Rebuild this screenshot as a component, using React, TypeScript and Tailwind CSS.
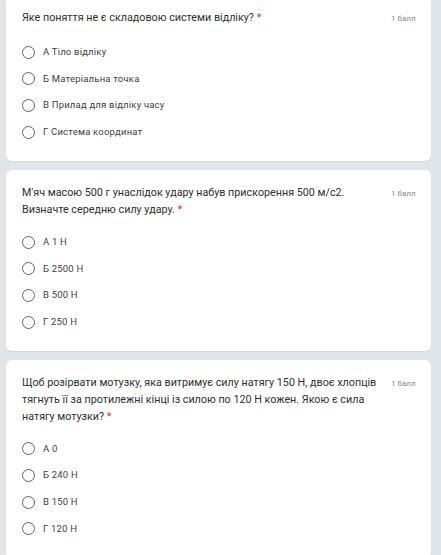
const questions = [
  {
    title: "Яке поняття не є складовою системи відліку?",
    options: ["А Тіло відліку", "Б Матеріальна точка", "В Прилад для відліку часу", "Г Система координат"],
  },
  {
    title: "М'яч масою 500 г унаслідок удару набув прискорення 500 м/с2. Визначте середню силу удару.",
    options: ["А 1 Н", "Б 2500 Н", "В 500 Н", "Г 250 Н"],
  },
  {
    title:
      "Щоб розірвати мотузку, яка витримує силу натягу 150 Н, двоє хлопців тягнуть її за протилежні кінці із силою по 120 Н кожен. Якою є сила натягу мотузки?",
    options: ["А 0", "Б 240 Н", "В 150 Н", "Г 120 Н"],
  },
];

function Question({ title, options, first }: { title: string; options: string[]; first?: boolean }) {
  return (
    <div
      className={`rounded-[6px] bg-white px-4 pb-4 shadow-[0_1px_1px_rgba(0,0,0,0.06)] ${
        first ? "-mt-[4px] pt-[14px]" : "pt-[15px]"
      }`}
    >
      <div className="flex items-start">
        <p className="flex-1 pr-[4px] text-[10.75px] leading-[16.7px] text-[#2d2f31]">
          {title}
          {"\u00a0"}
          <span className="text-[#d93025]">*</span>
        </p>
        <div className="w-6 pt-[4px] text-right text-[8px] leading-[10px] whitespace-nowrap text-[#80868b]">
          1 балл
        </div>
      </div>
      <div className={`flex flex-col ${first ? "mt-[12px]" : "mt-[10px]"}`}>
        {options.map((o) => (
          <div key={o} className="flex h-[26.67px] items-center gap-2">
            <span className="h-[13px] w-[13px] shrink-0 rounded-full border-[1.4px] border-[#5f6368]" />
            <span className="text-[9.5px] tracking-[0.2px] text-[#3c4043]">{o}</span>
          </div>
        ))}
      </div>
    </div>
  );
}

export default function App() {
  return (
    <div
      className="flex h-[555px] flex-col gap-[9px] overflow-hidden bg-[#e0e5e9] pl-[6px] pr-[10px]"
      style={{ fontFamily: "Roboto, 'Noto Sans', sans-serif" }}
    >
      {questions.map((q, i) => (
        <Question key={i} title={q.title} options={q.options} first={i === 0} />
      ))}
    </div>
  );
}
